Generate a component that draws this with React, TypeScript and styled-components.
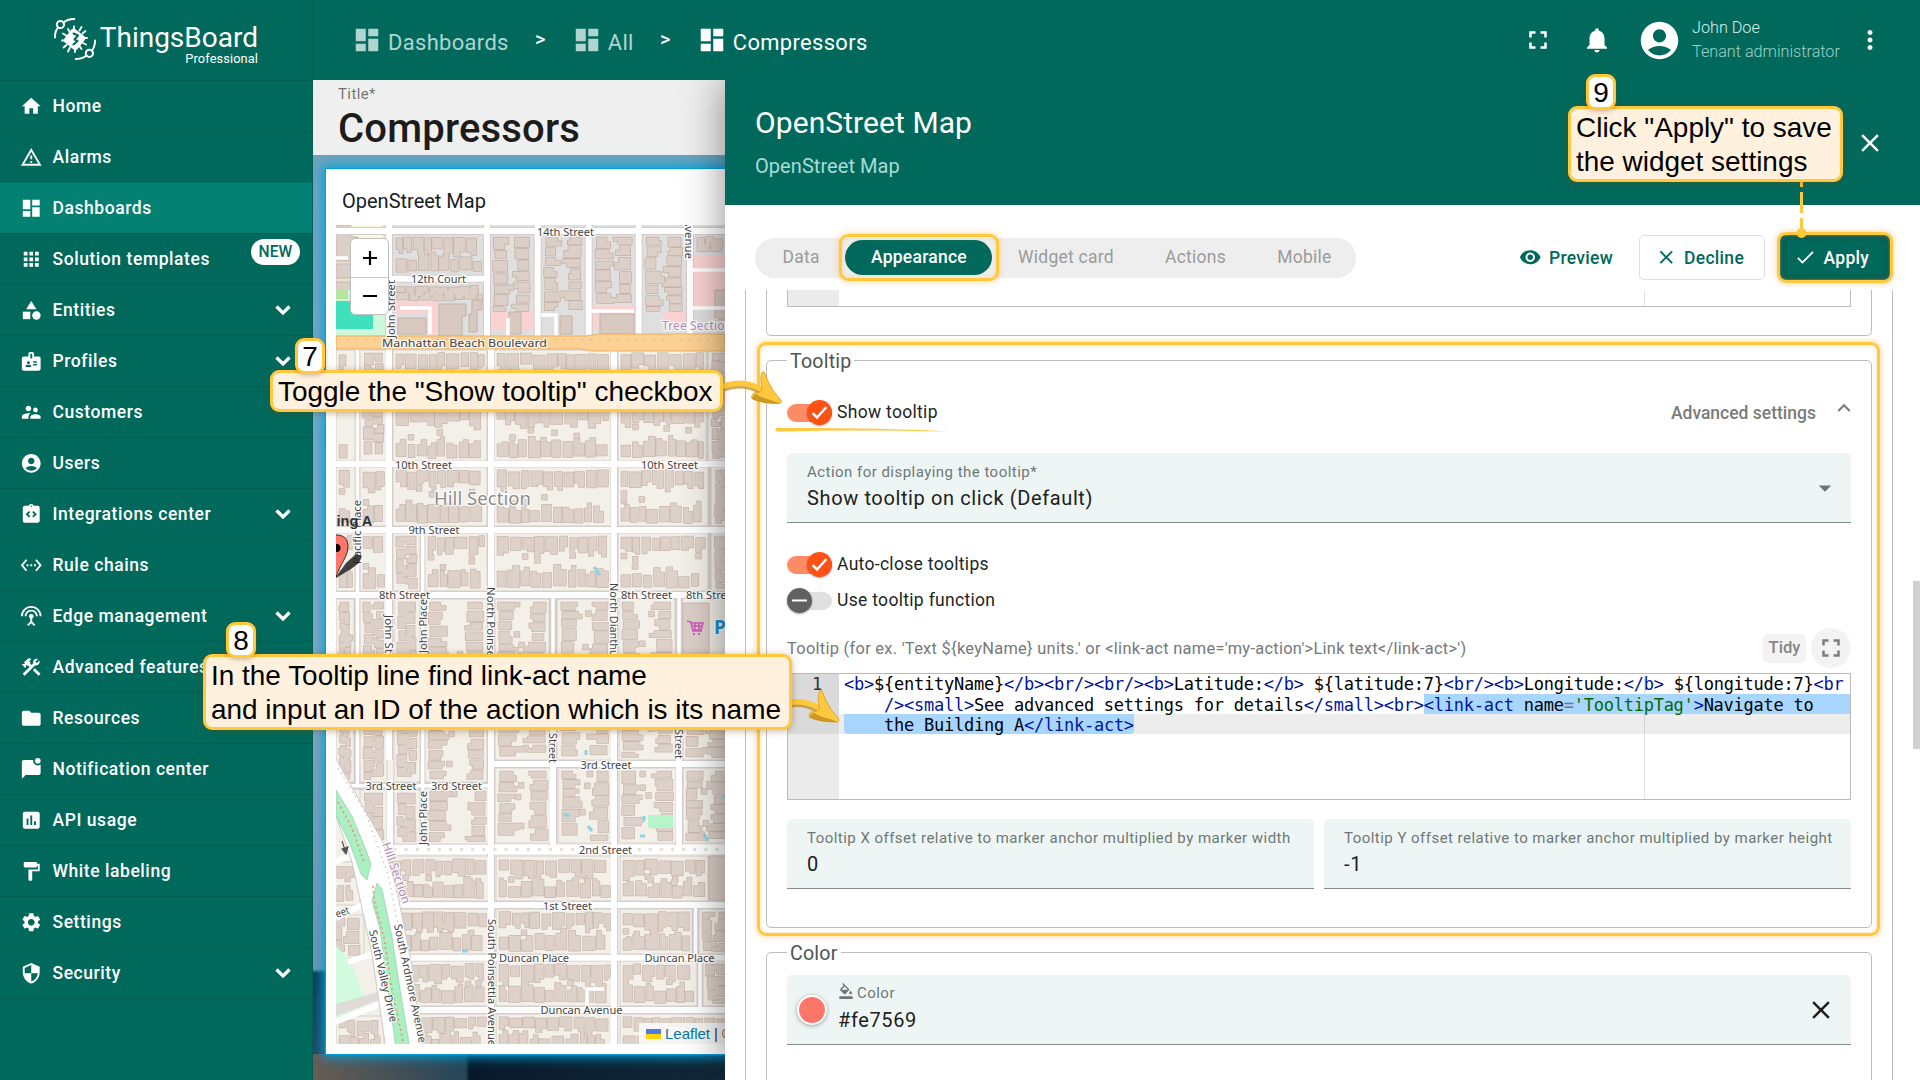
import React from 'react';
import styled, { createGlobalStyle, css } from 'styled-components';
import {
  MdHome, MdDashboard, MdApps, MdCategory, MdBadge, MdSupervisorAccount, MdAccountCircle,
  MdIntegrationInstructions, MdSettingsEthernet, MdSettingsInputAntenna, MdConstruction, MdFolder,
  MdInsertChart, MdFormatPaint, MdSettings, MdSecurity, MdFullscreen, MdNotifications,
  MdMoreVert, MdClose, MdRemoveRedEye, MdDone, MdExpandLess, MdArrowDropDown, MdFormatColorFill,
} from 'react-icons/md';

const GREEN = '#00695c';
const YELLOW = '#ffc83d';
const FONT = 'Roboto, "Noto Sans", sans-serif';

const GlobalStyle = createGlobalStyle`
  *, *::before, *::after { box-sizing: border-box; }
  body { margin: 0; font-family: ${FONT}; background: #fff; overflow: hidden; }
  svg { display: block; flex: none; }
`;

/* ---------- shell ---------- */
const Shell = styled.div`
  position: relative;
  display: flex;
  width: 1920px;
  height: 1080px;
  overflow: hidden;
`;

const Sidebar = styled.nav`
  flex: none;
  width: 313px;
  background: ${GREEN};
  border-right: 1px solid #005f53;
  color: #fff;
`;

const Main = styled.div`
  flex: 1;
  min-width: 0;
  display: flex;
  flex-direction: column;
`;

const Content = styled.div`
  flex: 1;
  min-height: 0;
  display: flex;
`;

/* ---------- sidebar ---------- */
const Brand = styled.div`
  height: 80px;
  display: flex;
  padding: 18px 0 0 54px;
  gap: 6px;
`;

const BrandText = styled.div`
  width: 156px;
  padding-top: 5px;
  display: flex;
  flex-direction: column;
  align-items: flex-end;
`;

const BrandName = styled.div`
  font-size: 28px;
  line-height: 30px;
  white-space: nowrap;
`;

const BrandEdition = styled.div`
  font-size: 12.8px;
  line-height: 15px;
  letter-spacing: 0.1px;
  margin-top: -2px;
`;

const NavItem = styled.a<{ $active?: boolean }>`
  height: 51px;
  display: flex;
  align-items: center;
  padding: 0 14px 0 20px;
  border-top: 1px solid rgba(0, 0, 0, 0.12);
  font-size: 17.5px;
  font-weight: 500;
  letter-spacing: 0.56px;
  white-space: nowrap;
  background: ${(p) => (p.$active ? '#028172' : 'transparent')};
`;

const NavLabel = styled.span`
  flex: 1;
  margin-left: 10px;
`;

const NavEnd = styled.div`
  border-top: 1px solid rgba(0, 0, 0, 0.12);
`;

const NewBadge = styled.span`
  align-self: flex-start;
  margin-top: 5px;
  margin-right: -2px;
  height: 26px;
  width: 49px;
  border-radius: 13px;
  background: #fff;
  color: ${GREEN};
  font-size: 15.6px;
  letter-spacing: 0.1px;
  line-height: 27px;
  text-align: center;
`;

/* ---------- top bar ---------- */
const TopBar = styled.header`
  height: 80px;
  flex: none;
  background: ${GREEN};
  color: #fff;
  display: flex;
  align-items: center;
  padding: 0 35px 0 39px;
`;

const Crumb = styled.span<{ $current?: boolean }>`
  display: flex;
  align-items: center;
  gap: 6px;
  font-size: 21.9px;
  letter-spacing: 0.36px;
  color: ${(p) => (p.$current ? '#fff' : '#b0d4cf')};
  span { padding-top: 4px; }
`;

const CrumbSep = styled.span`
  width: 63px;
  text-align: center;
  font-size: 20px;
  font-weight: 500;
  padding-bottom: 2px;
`;

const TopActions = styled.div`
  margin-left: auto;
  display: flex;
  align-items: center;
`;

const User = styled.div`
  margin: 0 15px 0 10px;
  width: 148px;
  white-space: nowrap;
`;

const UserLine = styled.div<{ $dim?: boolean }>`
  font-size: 16.2px;
  line-height: 24.5px;
  font-weight: 300;
  color: ${(p) => (p.$dim ? '#9dd0c8' : '#dceeeb')};
`;

const TopIcon = styled.div<{ $gap: number }>`
  margin-right: ${(p) => p.$gap}px;
`;

/* ---------- dashboard preview ---------- */
const Preview = styled.section`
  flex: none;
  width: 412px;
  display: flex;
  flex-direction: column;
  overflow: hidden;
`;

const TitleBar = styled.div`
  height: 75px;
  flex: none;
  background: #efefef;
  padding: 3px 0 0 25px;
`;

const TitleCaption = styled.div`
  font-size: 15px;
  line-height: 22px;
  letter-spacing: 0.4px;
  color: rgba(0, 0, 0, 0.55);
`;

const TitleText = styled.div`
  font-size: 40px;
  line-height: 48px;
  font-weight: 500;
  letter-spacing: 0.2px;
  color: #1c1c1c;
`;

const Backdrop = styled.div`
  flex: 1;
  min-height: 0;
  padding: 13px 0 25px 12px;
  background:
    linear-gradient(90deg, rgba(110, 95, 85, 0.9), rgba(20, 60, 85, 0.2) 37%, rgba(4, 20, 38, 0.9) 38%, rgba(4, 20, 38, 0.6)) 0 899px / 100% 26px no-repeat,
    linear-gradient(180deg, #6da3be 0, #7ba6c6 300px, #84a4ba 560px, #6f93ac 814px, #0b3a57 818px, #17455f 870px, #2c4858 100%);
`;

const Card = styled.div`
  height: 887px;
  width: 480px;
  background: #fff;
  border: 1px solid #00a0dc;
  box-shadow: 0 0 11px 2px #00a3da;
`;

const CardTitle = styled.div`
  height: 56px;
  padding: 18px 0 0 16px;
  font-size: 20px;
  line-height: 28px;
  color: #16211f;
`;

const MapFrame = styled.div`
  margin-left: 10px;
  width: 389px;
  height: 819px;
  position: relative;
  overflow: hidden;
`;

const ZoomControl = styled.div`
  position: absolute;
  left: 14px;
  top: 13px;
  width: 39px;
  border: 1px solid #c0c0c0;
  border-radius: 5px;
  background: #fff;
  overflow: hidden;
`;

const ZoomButton = styled.div`
  height: 37.5px;
  display: flex;
  align-items: center;
  justify-content: center;
  & + & { border-top: 1px solid #ccc; }
`;

const Attribution = styled.div`
  position: absolute;
  left: 303px;
  bottom: 0;
  width: 120px;
  height: 21px;
  padding-left: 7px;
  display: flex;
  align-items: center;
  gap: 4px;
  background: rgba(255, 255, 255, 0.8);
  font: 15px/20px "Liberation Sans", Arial, sans-serif;
  color: #333;
  white-space: nowrap;
  a { color: #0078a8; }
`;

const Flag = styled.i`
  width: 15px;
  height: 10px;
  background: linear-gradient(#4c7be1 50%, #ffd500 50%);
`;

/* ---------- settings panel ---------- */
const Panel = styled.section`
  flex: 1;
  min-width: 0;
  position: relative;
  display: flex;
  flex-direction: column;
  background: #fff;
  box-shadow: 0 0 40px rgba(0, 0, 0, 0.45);
  clip-path: inset(0 0 0 -60px);
`;

const PanelHead = styled.div`
  height: 125px;
  flex: none;
  background: ${GREEN};
  color: #fff;
  display: flex;
  align-items: center;
  padding: 0 35px 0 30px;
`;

const PanelTitles = styled.div`
  flex: 1;
  padding-bottom: 2px;
`;

const PanelTitle = styled.div`
  font-size: 30px;
  line-height: 36px;
  letter-spacing: 0.08px;
`;

const PanelSubtitle = styled.div`
  font-size: 20px;
  line-height: 26px;
  letter-spacing: 0.06px;
  margin-top: 12px;
  color: #a9dcd4;
`;

const ActionRow = styled.div`
  flex: none;
  height: 85px;
  padding: 30px 30px 10px 30px;
  display: flex;
  align-items: center;
`;

const Tabs = styled.div`
  height: 40px;
  width: 601px;
  padding: 2px;
  border-radius: 20px;
  background: #eee;
  display: flex;
`;

const Tab = styled.div<{ $active?: boolean }>`
  height: 35px;
  padding: 0 25.6px;
  border-radius: 18px;
  font-size: 17.5px;
  line-height: 35px;
  letter-spacing: 0.24px;
  color: #9b9b9b;
  white-space: nowrap;
  ${(p) => p.$active && css`
    background: ${GREEN};
    color: #fff;
    font-weight: 500;
  `}
`;

const Button = styled.button<{ $kind?: 'outline' | 'solid' }>`
  height: 45px;
  padding: 0 25px 0 0;
  border: 1px solid transparent;
  border-radius: 5px;
  background: none;
  display: flex;
  align-items: center;
  gap: 7px;
  font: 500 17.5px ${FONT};
  letter-spacing: 0.3px;
  color: ${GREEN};
  ${(p) => p.$kind === 'outline' && css`
    width: 126px;
    padding: 0 0 0 14.5px;
    border-color: #e0e0e0;
  `}
  ${(p) => p.$kind === 'solid' && css`
    width: 110px;
    padding: 0 0 0 13px;
    margin-left: 15px;
    background: ${GREEN};
    color: #fff;
    box-shadow: inset 0 0 6px rgba(0, 40, 30, 0.7);
  `}
`;

const Scroll = styled.div`
  flex: 1;
  min-height: 0;
  overflow: hidden;
  padding: 0 27px 0 20px;
`;

const Frame = styled.div`
  height: 900px;
  padding: 0 20px;
  border: 1px solid #bdbdbd;
  border-width: 0 1px;
`;

const PrevGroup = styled.div`
  height: 46px;
  padding: 0 20px;
  border: 1px solid #bdbdbd;
  border-top: 0;
  border-radius: 0 0 5px 5px;
`;

const Group = styled.fieldset<{ $h: number }>`
  margin: 12px 0 0;
  min-width: 0;
  height: ${(p) => p.$h}px;
  padding: 0 20px;
  border: 1px solid #bdbdbd;
  border-radius: 5px;
`;

const Legend = styled.legend`
  padding: 4px 3px 0;
  font-size: 19.6px;
  line-height: 20px;
  letter-spacing: 0.2px;
  color: #4b5553;
`;

const ToggleRow = styled.div<{ $top: number }>`
  margin-top: ${(p) => p.$top}px;
  height: 25px;
  display: flex;
  align-items: center;
  font-size: 17.5px;
  letter-spacing: 0.31px;
  color: #1d2624;
`;

const ToggleLabel = styled.span`
  padding-bottom: 2px;
`;

const Track = styled.span<{ $on?: boolean }>`
  width: 45px;
  height: 18px;
  margin-right: 5px;
  border-radius: 9px;
  display: flex;
  align-items: center;
  justify-content: ${(p) => (p.$on ? 'flex-end' : 'flex-start')};
  background: ${(p) => (p.$on ? '#ff8b66' : '#e0e0e0')};
`;

const Knob = styled.span<{ $on?: boolean }>`
  width: 25px;
  height: 25px;
  flex: none;
  border-radius: 50%;
  background: ${(p) => (p.$on ? '#ff5113' : '#616161')};
  box-shadow: 0 1px 2px rgba(0, 0, 0, 0.35);
  display: flex;
  align-items: center;
  justify-content: center;
`;

const Advanced = styled.span`
  margin-left: auto;
  display: flex;
  gap: 15px;
  font-weight: 500;
  letter-spacing: 0;
  color: #7b7b7b;
  svg { margin: -8px -6px 0 0; }
`;

const Field = styled.div<{ $top?: number }>`
  flex: 1;
  height: 70px;
  margin-top: ${(p) => p.$top ?? 0}px;
  padding: 9px 15px 0 20px;
  border-bottom: 1px solid #858b8a;
  border-radius: 5px 5px 0 0;
  background: #eef6f5;
  display: flex;
  justify-content: space-between;
`;

const FieldLabel = styled.div`
  display: flex;
  align-items: flex-end;
  gap: 3px;
  font-size: 15px;
  line-height: 20px;
  letter-spacing: 0.465px;
  white-space: nowrap;
  color: #6f7776;
`;

const FieldValue = styled.div`
  margin-top: 4px;
  font-size: 20px;
  line-height: 24px;
  letter-spacing: 0.62px;
  color: #212121;
`;

const DropArrow = styled.div`
  padding-top: 11px;
  margin-right: -4px;
  color: #6e7473;
`;

const FieldPair = styled.div`
  display: flex;
  gap: 10px;
`;

const Swatch = styled.span`
  width: 30px;
  height: 30px;
  margin: 11px 11px 0 -10px;
  border-radius: 50%;
  border: 2px solid #fff;
  background: #fe7569;
  box-shadow: 0 1px 4px rgba(0, 0, 0, 0.35);
`;

const Grow = styled.div`
  flex: 1;
`;

const ColorLabel = styled(FieldLabel)`
  margin-top: -1px;
  padding-bottom: 0;
  svg { margin-bottom: 4px; }
  & + div { margin-top: 5px; }
`;

const ClearIcon = styled.div`
  padding-top: 11px;
  color: #1d1d1d;
`;

const EditorHead = styled.div`
  margin-top: 15px;
  height: 40px;
  display: flex;
  align-items: center;
  gap: 5px;
`;

const EditorLabel = styled.div`
  flex: 1;
  font-size: 16.4px;
  letter-spacing: 0.29px;
  color: #75797a;
`;

const Tidy = styled.div`
  width: 43px;
  height: 29px;
  border-radius: 5px;
  background: #f3f3f3;
  font-size: 16.6px;
  font-weight: 500;
  line-height: 27px;
  text-align: center;
  color: #858585;
`;

const RoundIcon = styled.div`
  width: 40px;
  height: 40px;
  border-radius: 50%;
  background: #f3f3f3;
  color: #7d7d7d;
  display: flex;
  align-items: center;
  justify-content: center;
`;

const Editor = styled.div<{ $h: number; $top?: number }>`
  height: ${(p) => p.$h}px;
  margin-top: ${(p) => p.$top ?? 0}px;
  border: 1px solid #bbb;
  ${(p) => !p.$top && css`border-top: 0;`}
  display: flex;
  font: 17px/20px "DejaVu Sans Mono", "Liberation Mono", monospace;
  letter-spacing: -0.24px;
`;

const Gutter = styled.div`
  width: 51px;
  flex: none;
  background: #ebebeb;
`;

const GutterCell = styled.div`
  height: 60px;
  padding-right: 17px;
  background: #dadada;
  text-align: right;
  color: #333;
`;

const Code = styled.div`
  flex: 1;
  min-width: 0;
  background: linear-gradient(#e3e3e3, #e3e3e3) 804.5px 0 / 1px 100% no-repeat;
`;

const CodeLine = styled.div<{ $active?: boolean }>`
  height: 20px;
  line-height: 22px;
  padding-left: 5px;
  white-space: pre;
  color: #000;
  background: ${(p) => (p.$active ? 'rgba(0, 0, 0, 0.07)' : 'transparent')};
  display: flex;
  &:first-child { line-height: 20px; }
`;

const Tag = styled.span`
  color: #00149a;
`;
const Str = styled.span`
  color: #036a07;
`;
const Eq = styled.span`
  color: #687687;
`;
const Sel = styled.span<{ $fill?: boolean }>`
  background: #a8d6ff;
  ${(p) => p.$fill && css`flex: 1;`}
  ${(p) => !p.$fill && css`border-radius: 0 0 4px 4px;`}
`;

const ScrollThumb = styled.div`
  position: absolute;
  right: 0;
  top: 501px;
  width: 7px;
  height: 168px;
  background: #d0d0d0;
`;

/* ---------- annotations ---------- */
const Overlay = styled.div`
  position: absolute;
  inset: 0;
  font-family: "Liberation Sans", Arial, sans-serif;
  color: #000;
  pointer-events: none;
`;

type Box = { $x: number; $y: number; $w: number; $h: number };
const place = css<Box>`
  position: absolute;
  left: ${(p) => p.$x}px;
  top: ${(p) => p.$y}px;
  width: ${(p) => p.$w}px;
  height: ${(p) => p.$h}px;
`;

const Highlight = styled.div<Box>`
  ${place}
  border: 3px solid ${YELLOW};
  border-radius: 9px;
  box-shadow: 0 0 6px rgba(255, 170, 60, 0.6), inset 0 0 5px rgba(255, 190, 100, 0.45);
`;

const Callout = styled.div<Box>`
  ${place}
  padding: 2px 5px;
  border: 3px solid ${YELLOW};
  border-radius: 9px;
  background: #fff1de;
  box-shadow: 0 1px 7px rgba(120, 70, 0, 0.4);
  font-size: 27.95px;
  line-height: 34.2px;
  white-space: nowrap;
`;

const Step = styled.div<Box>`
  ${place}
  border: 3px solid ${YELLOW};
  border-radius: 9px;
  background: #fff;
  box-shadow: 0 1px 5px rgba(120, 70, 0, 0.4);
  font-size: 27.95px;
  line-height: 31px;
  text-align: center;
`;

const Drawings = styled.svg`
  position: absolute;
  inset: 0;
`;

/* ---------- map drawing ---------- */
type BlockMode = 'h' | 'v';
type Block = [number, number, number, number, BlockMode];

const upperBlocks: Block[] = [
  [393, 234, 484, 275, 'h'], [393, 282, 485, 304, 'h'],
  [490, 234, 533, 314, 'v'], [541, 234, 585, 316, 'v'], [592, 234, 635, 306, 'v'],
  [642, 234, 686, 314, 'v'], [694, 234, 730, 256, 'h'],
];

const lowerBlocks: Block[] = [
  [336, 350, 355, 461, 'h'], [360, 350, 387, 461, 'v'], [393, 350, 487, 404, 'h'], [393, 404, 487, 461, 'h'],
  [494, 350, 611, 404, 'h'], [494, 404, 611, 461, 'h'], [618, 350, 706, 404, 'h'], [618, 404, 706, 461, 'h'], [708, 350, 730, 461, 'v'],
  [336, 467, 355, 526, 'h'], [360, 467, 387, 526, 'h'], [393, 467, 487, 526, 'h'], [494, 467, 611, 526, 'h'],
  [618, 467, 708, 526, 'h'], [711, 467, 730, 526, 'v'],
  [336, 533, 355, 591, 'h'], [360, 533, 387, 591, 'h'], [393, 533, 420, 591, 'v'], [425, 533, 487, 591, 'h'],
  [494, 533, 611, 591, 'h'], [618, 533, 708, 591, 'h'], [711, 533, 730, 591, 'v'],
  [336, 599, 354, 782, 'v'], [360, 599, 387, 782, 'v'], [394, 599, 420, 782, 'v'], [425, 599, 487, 782, 'v'],
  [495, 599, 549, 760, 'v'], [557, 599, 612, 760, 'v'], [619, 599, 675, 760, 'v'], [683, 656, 730, 760, 'v'],
  [360, 790, 387, 844, 'v'], [394, 790, 420, 844, 'v'], [425, 788, 489, 844, 'v'],
  [495, 768, 551, 843, 'v'], [558, 768, 612, 843, 'v'], [619, 768, 676, 843, 'v'], [683, 768, 730, 843, 'v'],
  [386, 856, 489, 901, 'h'], [496, 856, 613, 901, 'h'], [620, 856, 708, 901, 'h'], [709, 856, 730, 901, 'v'],
  [398, 909, 489, 954, 'h'], [496, 909, 613, 954, 'h'], [620, 909, 692, 954, 'h'], [699, 909, 730, 954, 'v'],
  [408, 961, 489, 1006, 'h'], [496, 961, 613, 1006, 'h'], [620, 961, 697, 1006, 'h'], [703, 961, 730, 1006, 'v'],
  [418, 1014, 489, 1052, 'h'], [496, 1014, 613, 1052, 'h'], [620, 1014, 730, 1052, 'h'],
  [330, 862, 360, 905, 'h'], [330, 915, 364, 958, 'v'], [336, 1016, 384, 1052, 'h'],
];

/* Lays houses along the two long sides of each block; the seed keeps the drawing stable. */
function houses(blocks: Block[], seedStart: number): string {
  let seed = seedStart;
  const rnd = () => {
    seed = (seed * 16807) % 2147483647;
    return seed / 2147483647;
  };
  const parts: string[] = [];
  const rect = (x: number, y: number, w: number, h: number) => {
    parts.push(`M${x.toFixed(1)} ${y.toFixed(1)}h${w.toFixed(1)}v${h.toFixed(1)}h${(-w).toFixed(1)}z`);
  };
  blocks.forEach(([x0, y0, x1, y1, mode]) => {
    const along = mode === 'h' ? x1 - x0 : y1 - y0;
    const across = mode === 'h' ? y1 - y0 : x1 - x0;
    const maxDepth = Math.min(18, across * 0.38);
    [0, 1].forEach((side) => {
      let p = 3.5;
      while (p < along - 7) {
        const len = Math.min(6 + rnd() * 6, along - 3 - p);
        const depth = maxDepth * (0.55 + rnd() * 0.4);
        const inset = 3 + rnd() * 2.5;
        const put = (a: number, l: number, i: number, d: number) => {
          if (mode === 'h') rect(x0 + a, side ? y1 - i - d : y0 + i, l, d);
          else rect(side ? x1 - i - d : x0 + i, y0 + a, d, l);
        };
        put(p, len, inset, depth);
        if (rnd() > 0.35) put(p + len * (rnd() > 0.5 ? 0.45 : 0), len * 0.55, inset + 1, depth + 1 + rnd() * 3.5);
        if (rnd() > 0.78 && across > 44) put(p, 5, inset + depth + 5, 5);
        p += len + 1 + rnd() * 2;
      }
    });
  });
  return parts.join('');
}

const upperHouses = houses(upperBlocks, 71);
const lowerHouses = houses(lowerBlocks, 913);

type Label = [string, number, number, number, number?];
const streetLabels: Label[] = [
  ['14th Street', 537, 236, 57], ['12th Court', 411, 282.5, 55],
  ['Manhattan Beach Boulevard', 382, 347, 165],
  ['10th Street', 395, 469, 57], ['10th Street', 641, 469, 57], ['9th Street', 408.5, 534, 51],
  ['8th Street', 379, 599, 51], ['8th Street', 621, 599, 51], ['8th Street', 686, 599, 51],
  ['3rd Street', 365.5, 789.5, 51], ['3rd Street', 431, 789.5, 51], ['3rd Street', 580.5, 769, 51],
  ['2nd Street', 579, 854, 53], ['1st Street', 543, 909.5, 49],
  ['Duncan Place', 499, 962, 70], ['Duncan Place', 644.5, 962, 70], ['Duncan Avenue', 540.5, 1014, 82],
  ['John Street', 394.5, 338, 58, -90], ['Avenue', 685, 219, 40, 90],
  ['Pacific Place', 360.5, 564, 64, -90],
  ['John Street', 385, 615, 60, 90], ['John Place', 426.5, 653, 54, -90], ['John Place', 426.5, 845, 54, -90],
  ['North Poinsettia Street', 487, 587, 122, 90], ['North Dianthus Street', 610, 583, 112, 90],
  ['Street', 549, 733, 30, 90], ['Street', 674.5, 729, 30, 90],
  ['South Poinsettia Avenue', 488, 919, 127, 90],
  ['South Valley Drive', 369, 931, 94, 77], ['South Ardmore Avenue', 394, 925, 121, 78],
  ['eet', 337, 918, 14, -20],
];

const MapDrawing = () => (
  <svg width="389" height="819" viewBox="336 225 389 819">
    <rect x="336" y="225" width="389" height="819" fill="#f3efe9" />
    <rect x="336" y="225" width="389" height="112" fill="#e0dfdf" />
    <path d="M336 225h52v24l-6 46h-46z" fill="#e9dfd2" />
    <path d="M352 225h30l2 20-18 4-12-10z" fill="#fbf9d6" />
    <path d="M336 225h14v12h8v24h-22zM336 264h16v14h-16zM336 282h14v9h-14z" fill="#dccfc7" stroke="#c9b8ae" />
    <path d="M336 290h49v45h-49z" fill="#cdf8dc" />
    <path d="M336 290h12v9h-12z" fill="#b5e6a0" />
    <path d="M336 301h37v28h-37z" fill="#3fe0bc" />
    <path d="M396 302h42v34h-10v-22h-32zM490 312h43v18h-43zM591 306h44v24h-44zM664 312h24v12h-24zM693 256h32v52h-32z" fill="#fad2d2" />
    <g fill="none" stroke="#d2cdca" strokeWidth="8">
      <path d="M389 225V760M487 225V350M537.7 225V338M588.7 225V338M638.7 225V338M690 225V338M491 346V1044M614 346V1044M357.5 350V784M422.7 531V845M553 596V846M679 596V846M336 231H725M389 278.7H488M336 464H725M336 530H725M336 595H725M350 785.7H491M491 764H725M385 849H725M398 905H725M405 957.7H725M415 1010H725M711 350V600M695.5 905V958M700 958V1010M390 780V846" />
    </g>
    <g fill="#f3efe9">
      {lowerBlocks.map(([x0, y0, x1, y1], i) => (
        <rect key={i} x={x0} y={y0} width={x1 - x0} height={y1 - y0} stroke="#d5d0cb" />
      ))}
    </g>
    <path d="M393 398h94v12h-94zM494 398h117v12H494zM618 398h88v12h-88z" fill="#f3efe9" />
    <path d={upperHouses} fill="none" stroke="#c4b1a6" strokeWidth="1.5" strokeLinejoin="round" />
    <path d={upperHouses} fill="#dccfc7" />
    <path d={lowerHouses} fill="none" stroke="#cab9ae" strokeWidth="1.5" strokeLinejoin="round" />
    <path d={lowerHouses} fill="#ddd1c9" />
    <path d="M439 304h27v12h-4v20h-23zM398 318h28v16h-28zM472 300h10v10h-5v22h-8v-18h3zM600 314h34v20h-34zM509 312h12v22h-12zM560 316h12v18h-12zM715 290h12v30h-12z" fill="#d8cac1" stroke="#c4b1a6" />
    <path d="M683 603h26v50h-26zM709 856h20v44h-20z" fill="#dccfc7" stroke="#c9b8ae" />
    <g fill="none" stroke="#fff">
      <path strokeWidth="6" d="M389 225V760M487 225V350M537.7 225V338M588.7 225V338M638.7 225V338M690 225V338M491 346V1044M614 346V1044M336 231H725M389 278.7H488M336 464H725M336 530H725M336 595H725M491 764H725M398 905H725M405 957.7H725M415 1010H725M390 780V846M553 730V846M679 730V846" />
      <path strokeWidth="3.5" d="M357.5 350V784M422.7 531V845M553 596V740M679 596V740M350 785.7H491M695.5 905V958M700 958V1010M591 311H634M541 315H556V336M400 308H430V334M508 318V338M693 270H725M693 308H725M336 258H348M587 1010V989H604" />
      <path strokeWidth="9" d="M385 849.5H725" />
    </g>
    <path d="M395 849.5H725" stroke="#e3e0dc" strokeWidth="3.5" strokeDasharray="0.1 11" strokeLinecap="round" />
    <path d="M336 336H586L600 334H725V351H592L580 349H336z" fill="#fdd093" stroke="#e9b268" strokeWidth="1.2" />
    <path d="M338 339.5H725" stroke="#efc187" strokeWidth="2" strokeDasharray="2 7" />

    <path d="M330 940l20 20 16 42-36 24z" fill="#d1fadf" />
    <path d="M336 1004l48-14v8l-48 18z" fill="#dfdcd8" />
    <path d="M330 1024l60-24M330 864l24-10M336 918l36-18M348 962l38-12" stroke="#fff" strokeWidth="6" />
    <path d="M332 752l52 92 14 52 14 70 10 84h-36l-14-96-20-92-20-58z" fill="#fff" stroke="#cfc9c5" />
    <path d="M336 790l16 26 14 34 5 14-4 16-6-6-11-30-14-28z" fill="#aaf0c3" stroke="#9bc9a8" strokeWidth="0.7" />
    <path d="M377 883l5 6 10 48 8 52 10 60h-14l-8-60-8-60-8-28z" fill="#aaf0c3" stroke="#9bc9a8" strokeWidth="0.7" />
    <path d="M338 802l14 26 12 34M373 886l1 14 10 38 8 52 12 56" fill="none" stroke="#f58f78" strokeWidth="1.6" strokeDasharray="2.2 3" />
    <path d="M338 768l28 46 22 60 10 50" fill="none" stroke="#c9c4c0" strokeWidth="1.3" strokeDasharray="1.5 4" />
    <path d="M342 841l3 9M342 849l4 5 2-7z" stroke="#555" strokeWidth="1.2" fill="#555" />
    <path d="M648 815h25v13h-25z" fill="#b4f5ca" />
    <path d="M594 567l6 8M586 750v5M564 814l6 2M588 826l4 5M640 836h5M704 834l4 7M644 816v5M462 951h6M722 797h4" stroke="#8fd3e2" strokeWidth="3" />

    <g fontFamily='"Noto Sans", sans-serif' fontSize="11" fill="#454545" stroke="#fff" strokeWidth="2.6" strokeOpacity="0.8" strokeLinejoin="round" paintOrder="stroke">
      {streetLabels.map(([text, x, y, w, rot], i) => (
        <text key={i} textLength={w} lengthAdjust="spacingAndGlyphs" transform={`translate(${x} ${y}) rotate(${rot ?? 0})`}>{text}</text>
      ))}
      <text x="434" y="505" fontSize="18.5" fill="#8d8d8d" textLength="97">Hill Section</text>
      <text x="662" y="330" fontSize="12" fill="#b08bb5" textLength="70">Tree Section</text>
      <text transform="translate(382 844) rotate(71)" fontSize="12" fill="#b08bb5" textLength="64">Hill Section</text>
      <text x="714" y="634" fontSize="19" fontWeight="700" fill="#1d94cf">P</text>
    </g>
    <path d="M687 621l4 1 2 9h9M691 623h12l-2 7h-9M695 622v8M699 622v8M692 626h10" fill="none" stroke="#cf5fc0" strokeWidth="1.7" />
    <path d="M693 634h8" stroke="#cf5fc0" strokeWidth="2" strokeDasharray="2 3" />

    <path d="M336 577l10-14 10-9 6 2-3 7-8 6-15 9z" fill="#222" opacity="0.85" />
    <path d="M324 546c2-9 9-11 13-11 8 0 11 6 11 11 0 11-8 18-12 31-2-12-12-22-12-31z" fill="#fe7569" stroke="#222" strokeWidth="0.9" />
    <circle cx="336.500" cy="548" r="4" fill="#000" />
    <text x="336.500" y="526" fontFamily='"Liberation Sans", Arial, sans-serif' fontSize="14.5" fontWeight="700" fill="#333">ing A</text>
  </svg>
);

/* ---------- icons ---------- */
const AlarmIcon = () => (
  <svg width="22.500" height="22.500" viewBox="0 0 24 24" fill="currentColor">
    <path d="M12 2L1 21h22M12 6l7.530 13H4.470M11 10v4h2v-4m-2 6v2h2v-2" fillRule="evenodd" />
  </svg>
);

const MessageBadgeIcon = () => (
  <svg width="22.500" height="22.500" viewBox="0 0 24 24" fill="currentColor">
    <path d="M22 7v9c0 1.100-.9 2-2 2H6l-4 4V4c0-1.100.9-2 2-2h10.100A5 5 0 0 0 19 8c1.130 0 2.160-.37 3-1z" />
    <circle cx="19" cy="3" r="3" />
  </svg>
);

const ChevronIcon = () => (
  <svg width="30" height="30" viewBox="0 0 30 30" fill="none" stroke="currentColor" strokeWidth="3.300">
    <path d="M8.500 11.500l6.500 6.500 6.500-6.500" />
  </svg>
);

const Logo = () => (
  <svg width="42" height="42" viewBox="0 0 42 42" fill="none" stroke="#fff" strokeWidth="2" strokeLinecap="round">
    <circle cx="6.400" cy="6.500" r="3.600" />
    <circle cx="35.400" cy="35.300" r="3.600" />
    <path d="M9.500 4.500C12 2.200 16 1.200 20.300 1M4 9.300C1.800 12 .9 15.500 .9 19.500M32.300 37.500C29.800 39.800 26 41 21.700 41M38 32.700C40.200 30 41 26.500 41.100 22.500" />
    <rect x="12" y="12.800" width="17" height="17" rx="3" fill="#fff" stroke="none" transform="rotate(38 20.500 21.300)" />
    <path strokeWidth="1.900" d="M14 11l2 3.500M20 8.500v3M27.500 9l-2 3.500M31.500 13l-3 2.500M33 20h-3M32 26.500l-3-1.500M27.500 31l-2-3M21 34v-3M14 33.500l2-4M9.500 29.500l3-2.500M8 22.500h3M9 15.500l3 2" />
    <path d="M19.500 15.500l4.500 2-3.500 4 3 1.500-4 3.500" stroke="#00695c" strokeWidth="2.100" strokeLinejoin="round" />
  </svg>
);

const CheckMark = () => (
  <svg width="17" height="15" viewBox="0 0 17 15" fill="none" stroke="#fff" strokeWidth="2.500">
    <path d="M1.500 8l4.500 4.500L15.500 2" />
  </svg>
);

const MinusMark = () => (
  <svg width="15" height="3" viewBox="0 0 15 3"><path d="M0 1.500h15" stroke="#fff" strokeWidth="2" /></svg>
);

const Sign = ({ plus }: { plus?: boolean }) => (
  <svg width="16" height="16" viewBox="0 0 16 16" stroke="#000" strokeWidth="2.200">
    <path d={plus ? 'M1 8h14M8 1v14' : 'M1 8h14'} />
  </svg>
);

const Arrow = ({ dx = 0, dy = 0 }: { dx?: number; dy?: number }) => (
  <g transform={`translate(${dx} ${dy})`} strokeLinejoin="round">
    <path d="M724 389C736 384 752 385 764 394" fill="none" stroke="#b98618" strokeWidth="5" opacity="0.7" />
    <path d="M723 386.500C736 381 752 382 765 392" fill="none" stroke={YELLOW} strokeWidth="5.500" />
    <path d="M762 372.500c1-1 2-1 3 1 3 9 8 18 16 26.500 1 2 0 3-2 3.500-9 0-19-1-27-5-1-2 0-4 3-6 4 1 7-1 7-4-1-5-2-10 0-16z" fill={YELLOW} stroke="#d39b22" strokeWidth="0.8" />
    <path d="M752 399c9 4 19 5 28 4.500-8-4-17-4.500-24-9.500-2 1-4 3-4 5z" fill="#b98618" opacity="0.7" />
  </g>
);

/* ---------- data ---------- */
type NavEntry = { label: string; icon: React.ReactNode; active?: boolean; expandable?: boolean; isNew?: boolean };
const I = 22.5;
const nav: NavEntry[] = [
  { label: 'Home', icon: <MdHome size={I} /> },
  { label: 'Alarms', icon: <AlarmIcon /> },
  { label: 'Dashboards', icon: <MdDashboard size={I} />, active: true },
  { label: 'Solution templates', icon: <MdApps size={I} />, isNew: true },
  { label: 'Entities', icon: <MdCategory size={I} />, expandable: true },
  { label: 'Profiles', icon: <MdBadge size={I} />, expandable: true },
  { label: 'Customers', icon: <MdSupervisorAccount size={I} /> },
  { label: 'Users', icon: <MdAccountCircle size={I} /> },
  { label: 'Integrations center', icon: <MdIntegrationInstructions size={I} />, expandable: true },
  { label: 'Rule chains', icon: <MdSettingsEthernet size={I} /> },
  { label: 'Edge management', icon: <MdSettingsInputAntenna size={I} />, expandable: true },
  { label: 'Advanced features', icon: <MdConstruction size={I} /> },
  { label: 'Resources', icon: <MdFolder size={I} /> },
  { label: 'Notification center', icon: <MessageBadgeIcon /> },
  { label: 'API usage', icon: <MdInsertChart size={I} /> },
  { label: 'White labeling', icon: <MdFormatPaint size={I} /> },
  { label: 'Settings', icon: <MdSettings size={I} /> },
  { label: 'Security', icon: <MdSecurity size={I} />, expandable: true },
];

const Toggle = ({ on, label }: { on?: boolean; label: string }) => (
  <>
    <Track $on={on}><Knob $on={on}>{on ? <CheckMark /> : <MinusMark />}</Knob></Track>
    <ToggleLabel>{label}</ToggleLabel>
  </>
);

export default function App() {
  return (
    <>
      <GlobalStyle />
      <Shell>
        <Sidebar>
          <Brand>
            <Logo />
            <BrandText>
              <BrandName>ThingsBoard</BrandName>
              <BrandEdition>Professional</BrandEdition>
            </BrandText>
          </Brand>
          {nav.map((n) => (
            <NavItem key={n.label} $active={n.active}>
              {n.icon}
              <NavLabel>{n.label}</NavLabel>
              {n.isNew && <NewBadge>NEW</NewBadge>}
              {n.expandable && <ChevronIcon />}
            </NavItem>
          ))}
          <NavEnd />
        </Sidebar>

        <Main>
          <TopBar>
            <Crumb><MdDashboard size={30} /><span>Dashboards</span></Crumb>
            <CrumbSep>&gt;</CrumbSep>
            <Crumb><MdDashboard size={30} /><span>All</span></Crumb>
            <CrumbSep>&gt;</CrumbSep>
            <Crumb $current><MdDashboard size={30} /><span>Compressors</span></Crumb>
            <TopActions>
              <TopIcon $gap={29.5}><MdFullscreen size={30} /></TopIcon>
              <TopIcon $gap={25}><MdNotifications size={30} /></TopIcon>
              <MdAccountCircle size={45} />
              <User>
                <UserLine>John Doe</UserLine>
                <UserLine $dim>Tenant administrator</UserLine>
              </User>
              <MdMoreVert size={30} />
            </TopActions>
          </TopBar>

          <Content>
            <Preview>
              <TitleBar>
                <TitleCaption>Title*</TitleCaption>
                <TitleText>Compressors</TitleText>
              </TitleBar>
              <Backdrop>
                <Card>
                  <CardTitle>OpenStreet Map</CardTitle>
                  <MapFrame>
                    <MapDrawing />
                    <ZoomControl>
                      <ZoomButton><Sign plus /></ZoomButton>
                      <ZoomButton><Sign /></ZoomButton>
                    </ZoomControl>
                    <Attribution><Flag /><a>Leaflet</a><span>| ©</span></Attribution>
                  </MapFrame>
                </Card>
              </Backdrop>
            </Preview>

            <Panel>
              <PanelHead>
                <PanelTitles>
                  <PanelTitle>OpenStreet Map</PanelTitle>
                  <PanelSubtitle>OpenStreet Map</PanelSubtitle>
                </PanelTitles>
                <MdClose size={30} />
              </PanelHead>
              <ActionRow>
                <Tabs>
                  <Tab>Data</Tab>
                  <Tab $active>Appearance</Tab>
                  <Tab>Widget card</Tab>
                  <Tab>Actions</Tab>
                  <Tab>Mobile</Tab>
                </Tabs>
                <Grow />
                <Button><MdRemoveRedEye size={22.5} />Preview</Button>
                <Button $kind="outline"><MdClose size={22.5} />Decline</Button>
                <Button $kind="solid"><MdDone size={22.5} />Apply</Button>
              </ActionRow>
              <Scroll>
                <Frame>
                  <PrevGroup>
                    <Editor $h={17}><Gutter /><Code /></Editor>
                  </PrevGroup>

                  <Group $h={580}>
                    <Legend>Tooltip</Legend>
                    <ToggleRow $top={28}>
                      <Toggle on label="Show tooltip" />
                      <Advanced>Advanced settings<MdExpandLess size={26} /></Advanced>
                    </ToggleRow>
                    <Field $top={28}>
                      <div>
                        <FieldLabel>Action for displaying the tooltip*</FieldLabel>
                        <FieldValue>Show tooltip on click (Default)</FieldValue>
                      </div>
                      <DropArrow><MdArrowDropDown size={30} /></DropArrow>
                    </Field>
                    <ToggleRow $top={29}><Toggle on label="Auto-close tooltips" /></ToggleRow>
                    <ToggleRow $top={11}><Toggle label="Use tooltip function" /></ToggleRow>
                    <EditorHead>
                      <EditorLabel>{"Tooltip (for ex. 'Text ${keyName} units.' or <link-act name='my-action'>Link text</link-act>')"}</EditorLabel>
                      <Tidy>Tidy</Tidy>
                      <RoundIcon><MdFullscreen size={30} /></RoundIcon>
                    </EditorHead>
                    <Editor $h={127} $top={5}>
                      <Gutter><GutterCell>1</GutterCell></Gutter>
                      <Code>
                        <CodeLine>
                          <Tag>{'<b>'}</Tag>{'${entityName}'}<Tag>{'</b><br/><br/><b>'}</Tag>Latitude:<Tag>{'</b>'}</Tag>{' ${latitude:7}'}<Tag>{'<br/><b>'}</Tag>Longitude:<Tag>{'</b>'}</Tag>{' ${longitude:7}'}<Tag>{'<br'}</Tag>
                        </CodeLine>
                        <CodeLine>
                          <Tag>{'    /><small>'}</Tag>See advanced settings for details<Tag>{'</small><br>'}</Tag>
                          <Sel $fill><Tag>{'<link-act '}</Tag>name<Eq>=</Eq><Str>{"'TooltipTag'"}</Str><Tag>{'>'}</Tag>Navigate to</Sel>
                        </CodeLine>
                        <CodeLine $active>
                          <Sel>{'    the Building A'}<Tag>{'</link-act>'}</Tag></Sel>
                        </CodeLine>
                      </Code>
                    </Editor>
                    <FieldPair>
                      <Field $top={19}>
                        <div>
                          <FieldLabel>Tooltip X offset relative to marker anchor multiplied by marker width</FieldLabel>
                          <FieldValue>0</FieldValue>
                        </div>
                      </Field>
                      <Field $top={19}>
                        <div>
                          <FieldLabel>Tooltip Y offset relative to marker anchor multiplied by marker height</FieldLabel>
                          <FieldValue>-1</FieldValue>
                        </div>
                      </Field>
                    </FieldPair>
                  </Group>

                  <Group $h={240}>
                    <Legend>Color</Legend>
                    <Field $top={11}>
                      <Swatch />
                      <Grow>
                        <ColorLabel><MdFormatColorFill size={16} />Color</ColorLabel>
                        <FieldValue>#fe7569</FieldValue>
                      </Grow>
                      <ClearIcon><MdClose size={30} /></ClearIcon>
                    </Field>
                  </Group>
                </Frame>
              </Scroll>
              <ScrollThumb />
            </Panel>
          </Content>
        </Main>

        <Overlay>
          <Highlight $x={839} $y={234} $w={160} $h={47} />
          <Highlight $x={757} $y={342} $w={1123} $h={594} />
          <Highlight $x={1777} $y={232} $w={116} $h={51} />
          <Drawings width="1920" height="1080" viewBox="0 0 1920 1080">
            <path d="M1801.500 182v5M1801.500 192v21M1801.500 218v15" stroke={YELLOW} strokeWidth="3" />
            <circle cx="1801.500" cy="233" r="5" fill={YELLOW} />
            <path d="M776 428c50 0 110 0 174 3.500-60-1.500-120-1.500-173 0-2-1-2-3-1-3.500z" fill={YELLOW} />
            <Arrow />
            <Arrow dx={57.5} dy={318.5} />
          </Drawings>
          <Callout $x={270} $y={370} $w={453} $h={42}>Toggle the "Show tooltip" checkbox</Callout>
          <Step $x={295} $y={338} $w={30} $h={36}>7</Step>
          <Callout $x={203} $y={654} $w={589} $h={76}>In the Tooltip line find link-act name<br />and input an ID of the action which is its name</Callout>
          <Step $x={226} $y={622} $w={30} $h={36}>8</Step>
          <Callout $x={1568} $y={106} $w={275} $h={76}>Click "Apply" to save<br />the widget settings</Callout>
          <Step $x={1586} $y={74} $w={30} $h={36}>9</Step>
        </Overlay>
      </Shell>
    </>
  );
}
